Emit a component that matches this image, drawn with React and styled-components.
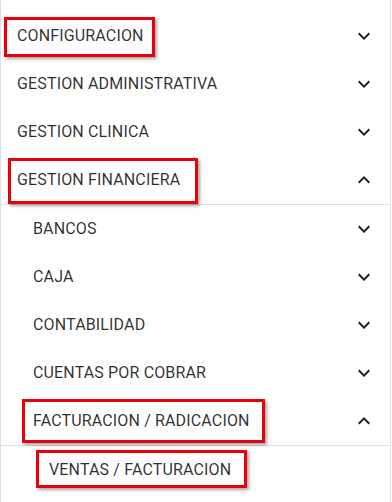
import React from 'react';
import styled, { createGlobalStyle } from 'styled-components';

const GlobalStyle = createGlobalStyle`
  body {
    margin: 0;
    background: #fff;
    font-family: Roboto, "Noto Sans", Arial, sans-serif;
  }
`;

const Nav = styled.nav`
  width: 391px;
  min-height: 502px;
  padding-top: 12px;
  box-sizing: border-box;
  border-left: 1px solid #e0e0e0;
  border-right: 1px solid #e0e0e0;
`;

const Row = styled.div`
  height: 48px;
  display: flex;
  align-items: center;
  justify-content: space-between;
  padding: 0 14px 0 ${(p) => 16 + p.$level * 16}px;
  font-size: 16px;
  letter-spacing: 0.15px;
  color: rgba(0, 0, 0, 0.82);
  cursor: pointer;
`;

const Label = styled.span`
  white-space: nowrap;
  line-height: 20px;
  ${({ $box }) =>
    $box &&
    `
    border: 3px solid #e8000b;
    box-shadow: 2px 2px 3px rgba(0,0,0,0.35);
    padding: ${$box[0]}px ${$box[1]}px ${$box[2]}px ${$box[3]}px;
    margin-left: ${-($box[3] + 3)}px;
    margin-top: ${Math.max(0, $box[2] - $box[0])}px;
    margin-bottom: ${Math.max(0, $box[0] - $box[2])}px;
  `}
`;

const Sub = styled.div`
  border-top: 1px solid #e0e0e0;
`;

const Chevron = ({ up }) => (
  <svg width="24" height="24" viewBox="0 0 24 24" fill="#212121">
    <path
      d={up ? 'M12 8l-6 6 1.41 1.41L12 10.83l4.59 4.58L18 14z' : 'M16.59 8.59L12 13.17 7.41 8.59 6 10l6 6 6-6z'}
    />
  </svg>
);

// box = padding inside the red annotation frame: [top, right, bottom, left]
const Item = ({ label, level = 0, box, open, leaf }) => (
  <Row $level={level}>
    <Label $box={box}>{label}</Label>
    {!leaf && <Chevron up={open} />}
  </Row>
);

export default function App() {
  return (
    <>
      <GlobalStyle />
      <Nav>
        <Item label="CONFIGURACION" box={[6, 8, 8, 10]} />
        <Item label="GESTION ADMINISTRATIVA" />
        <Item label="GESTION CLINICA" />
        <Item label="GESTION FINANCIERA" box={[9, 15, 11, 6]} open />
        <Sub>
          <Item label="BANCOS" level={1} />
          <Item label="CAJA" level={1} />
          <Item label="CONTABILIDAD" level={1} />
          <Item label="CUENTAS POR COBRAR" level={1} />
          <Item label="FACTURACION / RADICACION" level={1} box={[9, 12, 9, 8]} open />
          <Sub>
            <Item label="VENTAS / FACTURACION" level={2} box={[7, 13, 5, 10]} leaf />
          </Sub>
        </Sub>
      </Nav>
    </>
  );
}
